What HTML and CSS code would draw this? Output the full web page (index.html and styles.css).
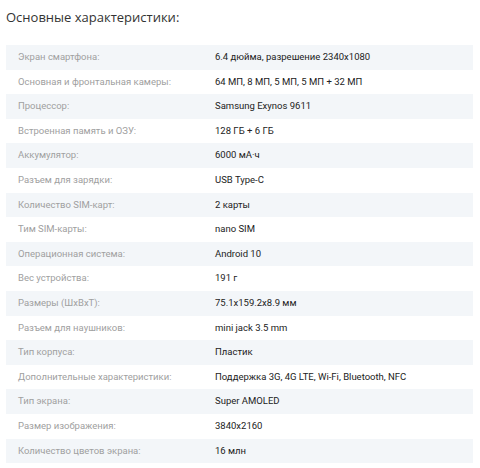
FILE: index.html
```html
<!DOCTYPE html>
<html lang="ru">
<head>
<meta charset="utf-8">
<link rel="stylesheet" href="styles.css">
</head>
<body>
<div class="specs">
  <h2 class="title">Основные характеристики:</h2>
  <div class="table">
    <div class="row"><div class="label">Экран смартфона:</div><div class="value">6.4 дюйма, разрешение 2340x1080</div></div>
    <div class="row"><div class="label">Основная и фронтальная камеры:</div><div class="value">64 МП, 8 МП, 5 МП, 5 МП + 32 МП</div></div>
    <div class="row"><div class="label">Процессор:</div><div class="value">Samsung Exynos 9611</div></div>
    <div class="row"><div class="label">Встроенная память и ОЗУ:</div><div class="value">128 ГБ + 6 ГБ</div></div>
    <div class="row"><div class="label">Аккумулятор:</div><div class="value">6000 мА·ч</div></div>
    <div class="row"><div class="label">Разъем для зарядки:</div><div class="value">USB Type-C</div></div>
    <div class="row"><div class="label">Количество SIM-карт:</div><div class="value">2 карты</div></div>
    <div class="row"><div class="label">Тим SIM-карты:</div><div class="value">nano SIM</div></div>
    <div class="row"><div class="label">Операционная система:</div><div class="value">Android 10</div></div>
    <div class="row"><div class="label">Вес устройства:</div><div class="value">191 г</div></div>
    <div class="row"><div class="label">Размеры (ШхВхТ):</div><div class="value">75.1x159.2x8.9 мм</div></div>
    <div class="row"><div class="label">Разъем для наушников:</div><div class="value">mini jack 3.5 mm</div></div>
    <div class="row"><div class="label">Тип корпуса:</div><div class="value">Пластик</div></div>
    <div class="row"><div class="label">Дополнительные характеристики:</div><div class="value">Поддержка 3G, 4G LTE, Wi-Fi, Bluetooth, NFC</div></div>
    <div class="row"><div class="label">Тип экрана:</div><div class="value">Super AMOLED</div></div>
    <div class="row"><div class="label">Размер изображения:</div><div class="value">3840x2160</div></div>
    <div class="row"><div class="label">Количество цветов экрана:</div><div class="value">16 млн</div></div>
  </div>
</div>
</body>
</html>
```
FILE: styles.css
```css
html, body {
  margin: 0;
  padding: 0;
  background: #ffffff;
}
.specs {
  padding: 6px 7px 0 6px;
  font-family: Roboto, "Noto Sans", sans-serif;
}
.title {
  margin: 0 0 18px 0;
  padding-top: 1px;
  font-family: "Open Sans", "Noto Sans", sans-serif;
  font-weight: 400;
  font-size: 13px;
  line-height: 20px;
  color: #333333;
}
.table {
  display: flex;
  flex-direction: column;
  margin-top: 1px;
}
.row {
  display: grid;
  grid-template-columns: 209px 1fr;
  padding: 5px 0;
  line-height: 14.6px;
  font-size: 9.5px;
}
.row:nth-child(odd) {
  background: #f3f6f9;
}
.label {
  padding-left: 12px;
  color: #a0a0a0;
}
.value {
  color: #222222;
  font-weight: 400;
}
```
